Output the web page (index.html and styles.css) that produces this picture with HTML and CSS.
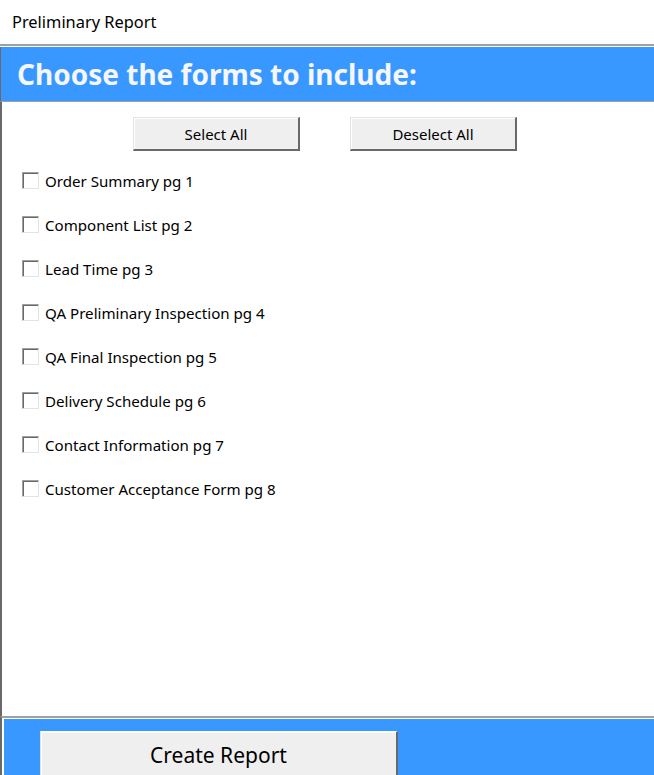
FILE: index.html
```html
<!DOCTYPE html>
<html>
<head>
<meta charset="utf-8">
<link rel="stylesheet" href="styles.css">
</head>
<body>
<div class="titlebar">Preliminary Report</div>
<div class="window">
  <div class="header"><h1 class="header-title">Choose the forms to include:</h1></div>
  <div class="content">
    <div class="btn-row">
      <button class="btn">Select All</button>
      <button class="btn">Deselect All</button>
    </div>
    <ul class="checklist">
      <li class="item"><span class="box"></span><span class="label">Order Summary pg 1</span></li>
      <li class="item"><span class="box"></span><span class="label">Component List pg 2</span></li>
      <li class="item"><span class="box"></span><span class="label">Lead Time pg 3</span></li>
      <li class="item"><span class="box"></span><span class="label">QA Preliminary Inspection pg 4</span></li>
      <li class="item"><span class="box"></span><span class="label">QA Final Inspection pg 5</span></li>
      <li class="item"><span class="box"></span><span class="label">Delivery Schedule pg 6</span></li>
      <li class="item"><span class="box"></span><span class="label">Contact Information pg 7</span></li>
      <li class="item"><span class="box"></span><span class="label">Customer Acceptance Form pg 8</span></li>
    </ul>
  </div>
  <div class="footer">
    <div class="footer-inner">
      <button class="btn btn-create">Create Report</button>
    </div>
  </div>
</div>
</body>
</html>
```

FILE: styles.css
```css
html, body {
  margin: 0;
  padding: 0;
  background: #ffffff;
  height: 775px;
  overflow: hidden;
}
body {
  font-family: "Noto Sans", "Open Sans", sans-serif;
  color: #000;
}
.titlebar {
  height: 44px;
  line-height: 44px;
  padding-left: 12px;
  font-size: 16.4px;
  box-sizing: border-box;
}
.window {
  border-top: 2px solid #a0a0a0;
  display: flex;
  flex-direction: column;
  height: 729px;
}
.header {
  margin-top: 1px;
  height: 54px;
  background: #3898ff;
  border-bottom: 1px solid #a0a0a0;
  border-left: 1px solid #696969;
  display: flex;
  align-items: center;
  padding-left: 16px;
}
.header-title {
  margin: 0;
  color: #f6f6ff;
  font-size: 28px;
  font-weight: 700;
}
.content {
  flex: 1;
  border-left: 2px solid #696969;
  padding-top: 15px;
}
.btn-row {
  display: flex;
  gap: 50px;
  padding-left: 131px;
}
.btn {
  font-family: "Noto Sans", "Open Sans", sans-serif;
  font-size: 15px;
  width: 167px;
  height: 34px;
  padding: 0;
  background: #efefef;
  border-top: 1px solid #e3e3e3;
  border-left: 1px solid #e3e3e3;
  border-right: 2px solid #696969;
  border-bottom: 2px solid #696969;
  box-shadow: inset 1px 1px 0 #ffffff;
  color: #000;
}
.checklist {
  list-style: none;
  margin: 21px 0 0 0;
  padding: 0 0 0 20px;
  display: flex;
  flex-direction: column;
  gap: 27px;
}
.item {
  display: flex;
  align-items: center;
  height: 17px;
  gap: 6px;
}
.box {
  width: 17px;
  height: 17px;
  box-sizing: border-box;
  border-top: 1px solid #a0a0a0;
  border-left: 1px solid #a0a0a0;
  border-right: 1px solid #e3e3e3;
  border-bottom: 1px solid #e3e3e3;
  box-shadow: inset 1px 1px 0 #696969;
  background: #fff;
  flex: none;
}
.label {
  font-size: 15.1px;
  line-height: 17px;
  padding-top: 2px;
  white-space: nowrap;
}
.footer {
  border-top: 2px solid #a0a0a0;
  border-left: 2px solid #696969;
  height: 59px;
  box-sizing: border-box;
}
.footer-inner {
  height: 100%;
  background: #3898ff;
  border-top: 1px solid #ffffff;
  border-left: 2px solid #ffffff;
  box-sizing: border-box;
  padding: 12px 0 0 36px;
}
.btn-create {
  width: 358px;
  height: 50px;
  font-size: 21px;
  border-bottom: none;
  vertical-align: top;
  padding-bottom: 4px;
  border-top: 1px solid #ffffff;
}
```
